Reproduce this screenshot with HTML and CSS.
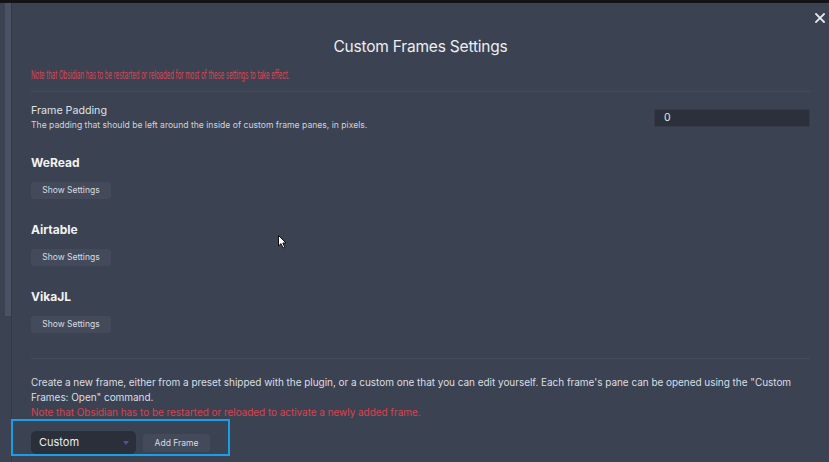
FILE: index.html
```html
<!DOCTYPE html>
<html>
<head>
<meta charset="utf-8">
<link rel="stylesheet" href="styles.css">
</head>
<body>
<div class="topstrip"></div>
<div class="frame">
  <div class="gutter"><div class="thumb"></div></div>
  <div class="modal">
    <button class="close" aria-label="Close">
      <svg width="10" height="10" viewBox="0 0 10 10"><path d="M1 1L9 9M9 1L1 9" stroke="#e6e8ee" stroke-width="1.8" stroke-linecap="square"/></svg>
    </button>
    <h1 class="title">Custom Frames Settings</h1>
    <p class="warn warn-top"><span>Note that Obsidian has to be restarted or reloaded for most of these settings to take effect.</span></p>
    <div class="setting">
      <div class="info">
        <div class="name">Frame Padding</div>
        <div class="desc">The padding that should be left around the inside of custom frame panes, in pixels.</div>
      </div>
      <div class="input">0</div>
    </div>
    <div class="frameblock">
      <h3>WeRead</h3>
      <button class="btn">Show Settings</button>
    </div>
    <div class="frameblock">
      <h3>Airtable</h3>
      <button class="btn">Show Settings</button>
    </div>
    <div class="frameblock">
      <h3>VikaJL</h3>
      <button class="btn">Show Settings</button>
    </div>
    <hr class="sep2">
    <p class="para">Create a new frame, either from a preset shipped with the plugin, or a custom one that you can edit yourself. Each frame's pane can be opened using the "Custom Frames: Open" command.<br><span class="red">Note that Obsidian has to be restarted or reloaded to activate a newly added frame.</span></p>
    <div class="addrow">
      <div class="select">Custom<span class="caret"></span></div>
      <button class="btn btn-add">Add Frame</button>
    </div>
    <div class="highlight"></div>
    <svg class="cursor" width="9" height="14" viewBox="0 0 9 14"><path d="M0.5 0.5V11L3 8.6L5 13L6.8 12.2L4.8 8H8Z" fill="#fff" stroke="#111" stroke-width="1"/></svg>
  </div>
</div>
</body>
</html>
```
FILE: styles.css
```css
* { box-sizing: border-box; }
html, body { margin: 0; padding: 0; }
body {
  width: 829px;
  height: 462px;
  overflow: hidden;
  background: #3b4252;
  font-family: Inter, "Noto Sans", sans-serif;
  color: #dcdfe5;
}
.topstrip {
  height: 3px;
  background: #121418;
}
.frame {
  display: flex;
  height: 459px;
}
.gutter {
  width: 12px;
  background: #3b4252;
  border-right: 1px solid #333947;
  padding-left: 5px;
  padding-right: 1px;
}
.thumb {
  width: 6px;
  height: 313px;
  background: #4a5263;
}
.modal {
  position: relative;
  flex: 1;
  padding: 0 19px 0 19px;
}
.close {
  position: absolute;
  right: 3px;
  top: 9px;
  width: 12px;
  height: 12px;
  padding: 0;
  border: 0;
  background: none;
  display: flex;
  align-items: center;
  justify-content: center;
}
.title {
  margin: 0;
  padding-top: 35px;
  height: 55px;
  text-align: center;
  font-size: 15.5px;
  font-weight: 400;
  line-height: 18px;
  color: #eceef2;
  letter-spacing: -0.2px;
}
.warn {
  margin: 0;
  font-size: 11.5px;
  line-height: 14px;
  color: #df4451;
  height: 34px;
  padding-top: 10px;
  border-bottom: 1px solid #444b5a;
  white-space: nowrap;
}
.warn-top span {
  display: inline-block;
  transform: scaleX(0.525);
  transform-origin: left center;
}
.setting {
  display: flex;
  align-items: flex-start;
  justify-content: space-between;
  padding-top: 11px;
  height: 62px;
}
.name {
  font-size: 10.7px;
  line-height: 15px;
  color: #dfe2e8;
}
.desc {
  font-size: 8.6px;
  line-height: 14px;
  color: #d0d4db;
}
.input {
  width: 156px;
  height: 18px;
  background: #2b303b;
  border: 1px solid #353b48;
  border-radius: 2px;
  margin-top: 6px;
  font-size: 10.5px;
  line-height: 16px;
  padding-left: 9px;
  color: #e4e6ea;
}
.frameblock {
  height: 67px;
}
.frameblock h3 {
  margin: 0;
  font-size: 12px;
  font-weight: 700;
  line-height: 14px;
  color: #f2f3f5;
  height: 28px;
  padding-top: 2px;
}
.btn {
  display: block;
  font-family: Inter, "Noto Sans", sans-serif;
  background: #434a5a;
  border: 0;
  border-radius: 3px;
  color: #d9dce2;
  font-size: 8.5px;
  height: 17px;
  width: 80px;
  padding: 0;
  line-height: 17px;
}
.sep2 {
  border: 0;
  border-top: 1px solid #444b5a;
  margin: 3px 0 0 0;
}
.para {
  margin: 0 -12px 0 0;
  padding-top: 16px;
  font-size: 10px;
  letter-spacing: -0.04px;
  line-height: 15px;
  color: #dcdfe5;
  height: 70px;
}
.red {
  color: #d94350;
  letter-spacing: -0.05px;
}
.addrow {
  display: flex;
  align-items: center;
  gap: 7px;
  margin-top: 2px;
}
.select {
  position: relative;
  width: 105px;
  height: 23px;
  background: #2a2f3a;
  border-radius: 5px;
  font-size: 11px;
  line-height: 23px;
  padding-left: 8px;
  color: #eceef2;
}
.caret {
  position: absolute;
  right: 7px;
  top: 10px;
  border-left: 3.5px solid transparent;
  border-right: 3.5px solid transparent;
  border-top: 4px solid #5b4c9c;
}
.btn-add {
  width: 67px;
  height: 18px;
  line-height: 18px;
  font-size: 8.5px;
}
.highlight {
  position: absolute;
  left: -1px;
  top: 416px;
  width: 219px;
  height: 37px;
  border: 2px solid #17a0e6;
}
.cursor {
  position: absolute;
  left: 266px;
  top: 232px;
}
```
